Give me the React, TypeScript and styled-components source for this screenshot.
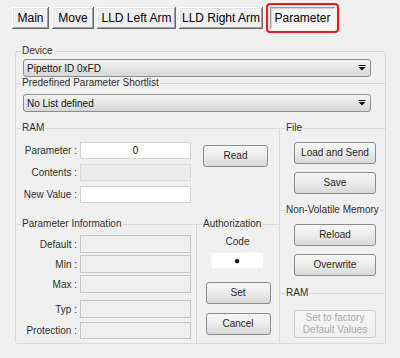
import React from 'react';
import styled, { createGlobalStyle } from 'styled-components';

const GlobalStyle = createGlobalStyle`
  html, body {
    margin: 0;
    padding: 0;
    background: #f0f0f0;
  }
  body {
    font-family: "Liberation Sans", Arial, sans-serif;
  }
`;

const LINE = '#d8dbde';

const Screen = styled.div`
  width: 400px;
  height: 358px;
  background: #f0f0f0;
  overflow: hidden;
`;

/* tab strip */
const TabBar = styled.div`
  display: flex;
  align-items: center;
  gap: 3px;
  height: 30px;
  padding: 3px 0 0 12px;
`;

const Tab = styled.div<{ $w: number; $active?: boolean }>`
  width: ${(p) => p.$w}px;
  height: 22px;
  box-sizing: border-box;
  display: flex;
  align-items: center;
  justify-content: center;
  font-family: "Liberation Sans", Arial, sans-serif;
  font-size: 12px;
  color: #000;
  background: ${(p) => (p.$active ? '#f6f6f6' : '#f0f0f0')};
  box-shadow: ${(p) =>
    p.$active
      ? 'inset 1px 1px #9a9a9a, inset -1px -1px #ffffff, inset 2px 2px #d2d2d2'
      : 'inset -1px -1px #696969, inset 1px 1px #ffffff, inset -2px -2px #a0a0a0, inset 2px 2px #e3e3e3'};
`;

const Highlight = styled.div`
  border: 2px solid #ec1b1b;
  border-radius: 4px;
  padding: 2px;
`;

/* group boxes */
const Panel = styled.div`
  position: relative;
  margin: 18px 0 0 15px;
  width: 371px;
  height: 293px;
  box-sizing: border-box;
  border: 1px solid ${LINE};
  border-radius: 3px;
  font-family: "Liberation Sans", Arial, sans-serif;
  font-size: 10px;
  color: #332e2c;
`;

const Group = styled.div<{ $left?: boolean; $right?: boolean }>`
  position: relative;
  box-sizing: border-box;
  border-top: 1px solid ${LINE};
  border-left: ${(p) => (p.$left ? `1px solid ${LINE}` : 'none')};
  border-right: ${(p) => (p.$right ? `1px solid ${LINE}` : 'none')};
`;

const Caption = styled.span`
  position: absolute;
  top: -7px;
  left: 5px;
  padding: 0 1px;
  line-height: 12px;
  background: #f0f0f0;
  white-space: nowrap;
`;

/* combo box */
const Combo = styled.div`
  height: 18px;
  box-sizing: border-box;
  display: flex;
  align-items: center;
  justify-content: space-between;
  padding: 0 4px 0 3px;
  border: 1px solid #8e8e8e;
  border-radius: 3px;
  background: linear-gradient(#f3f3f3, #e6e6e6 50%, #d6d6d6);
  color: #111;
`;

const DeviceCombo = styled(Combo)`
  margin: 7px 14px 0 7px;
`;

const ShortlistGroup = styled(Group)`
  margin-top: 6px;
  padding: 10px 14px 16px 7px;
`;

const Arrow = () => (
  <svg width="8" height="6" viewBox="0 0 8 6">
    <rect x="0.5" y="0" width="7" height="1" fill="#111" />
    <polygon points="0.5,2 7.5,2 4,5.5" fill="#111" />
  </svg>
);

/* lower area */
const BottomRow = styled.div`
  display: flex;
  height: 215px;
`;

const LeftCol = styled.div`
  width: 263px;
  display: flex;
  flex-direction: column;
`;

const RightCol = styled.div`
  width: 106px;
  display: flex;
  flex-direction: column;
`;

const RamGroup = styled(Group)`
  height: 96px;
  padding-top: 13px;
  display: flex;
  align-items: flex-start;
`;

const FieldGrid = styled.div`
  display: grid;
  grid-template-columns: 61px 111px;
  grid-auto-rows: 17px;
  column-gap: 3px;
  row-gap: 5px;
`;

const Label = styled.span`
  display: flex;
  align-items: center;
  justify-content: flex-end;
  white-space: nowrap;
`;

const Field = styled.input<{ $tone: 'edit' | 'off' | 'info' | 'plain'; $center?: boolean }>`
  box-sizing: border-box;
  width: 100%;
  height: 100%;
  margin: 0;
  padding: 0 3px;
  font: inherit;
  color: #111;
  outline: none;
  text-align: ${(p) => (p.$center ? 'center' : 'left')};
  border: 1px solid
    ${(p) => ({ edit: '#d2d2d2', off: '#dadada', info: '#c6c6c6', plain: '#f4f4f4' }[p.$tone])};
  background: ${(p) => ({ edit: '#ffffff', off: '#ececec', info: '#efefef', plain: '#ffffff' }[p.$tone])};
`;

const LowerRow = styled.div`
  display: flex;
  height: 119px;
`;

const InfoGroup = styled(Group)`
  width: 181px;
  padding-top: 10px;
  display: flex;
  flex-direction: column;
`;

const InfoRow = styled.div<{ $mt: number; $h: number }>`
  display: grid;
  grid-template-columns: 61px 111px;
  column-gap: 3px;
  height: ${(p) => p.$h}px;
  margin-top: ${(p) => p.$mt}px;
`;

const AuthGroup = styled(Group)`
  width: 82px;
  padding-top: 11px;
  display: flex;
  flex-direction: column;
  align-items: center;
`;

const CodeLabel = styled.div`
  line-height: 12px;
  margin-left: -1px;
`;

const CodeBox = styled.div`
  width: 53px;
  height: 17px;
  margin: 4px 0 0 -2px;
`;

const Button = styled.button<{ $w: number; $h?: number; $mt?: number; $ml?: number }>`
  flex: none;
  width: ${(p) => p.$w}px;
  height: ${(p) => p.$h ?? 22}px;
  margin: ${(p) => p.$mt ?? 0}px 0 0 ${(p) => p.$ml ?? 0}px;
  box-sizing: border-box;
  padding: 0;
  border: 1px solid #8c8c8c;
  border-radius: 3px;
  background: linear-gradient(#f7f7f7, #ebebeb 50%, #d9d9d9);
  font: inherit;
  line-height: 12px;
  color: #2a2523;

  &:disabled {
    border-color: #cdcdcd;
    background: linear-gradient(#f6f6f6, #efefef);
    color: #a9a9a9;
  }
`;

const SideGroup = styled(Group)<{ $h?: number; $pt: number }>`
  ${(p) => (p.$h ? `height: ${p.$h}px;` : 'flex: 1;')}
  padding-top: ${(p) => p.$pt}px;
  display: flex;
  flex-direction: column;
`;

const tabs = [
  { label: 'Main', w: 37 },
  { label: 'Move', w: 42 },
  { label: 'LLD Left Arm', w: 79 },
  { label: 'LLD Right Arm', w: 84 },
];

const ramFields = [
  { label: 'Parameter :', tone: 'edit' as const, value: '0' },
  { label: 'Contents :', tone: 'off' as const, value: '' },
  { label: 'New Value :', tone: 'edit' as const, value: '' },
];

const infoFields = [
  { label: 'Default :', mt: 0, h: 18 },
  { label: 'Min :', mt: 2, h: 18 },
  { label: 'Max :', mt: 2, h: 18 },
  { label: 'Typ :', mt: 7, h: 18 },
  { label: 'Protection :', mt: 4, h: 17 },
];

export default function App() {
  return (
    <Screen>
      <GlobalStyle />
      <TabBar>
        {tabs.map((t) => (
          <Tab key={t.label} $w={t.w}>
            {t.label}
          </Tab>
        ))}
        <Highlight>
          <Tab $w={65} $active>
            Parameter
          </Tab>
        </Highlight>
      </TabBar>

      <Panel>
        <Caption>Device</Caption>
        <DeviceCombo>
          <span>Pipettor ID 0xFD</span>
          <Arrow />
        </DeviceCombo>

        <ShortlistGroup>
          <Caption>Predefined Parameter Shortlist</Caption>
          <Combo>
            <span>No List defined</span>
            <Arrow />
          </Combo>
        </ShortlistGroup>

        <BottomRow>
          <LeftCol>
            <RamGroup>
              <Caption>RAM</Caption>
              <FieldGrid>
                {ramFields.map((f) => (
                  <React.Fragment key={f.label}>
                    <Label>{f.label}</Label>
                    <Field $tone={f.tone} $center readOnly defaultValue={f.value} />
                  </React.Fragment>
                ))}
              </FieldGrid>
              <Button $w={65} $mt={3} $ml={12}>
                Read
              </Button>
            </RamGroup>

            <LowerRow>
              <InfoGroup $right>
                <Caption>Parameter Information</Caption>
                {infoFields.map((f) => (
                  <InfoRow key={f.label} $mt={f.mt} $h={f.h}>
                    <Label>{f.label}</Label>
                    <Field $tone="info" readOnly defaultValue="" />
                  </InfoRow>
                ))}
              </InfoGroup>

              <AuthGroup>
                <Caption>Authorization</Caption>
                <CodeLabel>Code</CodeLabel>
                <CodeBox>
                  <Field $tone="plain" $center readOnly defaultValue={'\u25CF'} />
                </CodeBox>
                <Button $w={65} $mt={13}>
                  Set
                </Button>
                <Button $w={65} $mt={9}>
                  Cancel
                </Button>
              </AuthGroup>
            </LowerRow>
          </LeftCol>

          <RightCol>
            <SideGroup $left $h={82} $pt={13}>
              <Caption>File</Caption>
              <Button $w={82} $ml={14}>
                Load and Send
              </Button>
              <Button $w={82} $ml={14} $mt={8}>
                Save
              </Button>
            </SideGroup>
            <SideGroup $left $h={83} $pt={13}>
              <Caption>Non-Volatile Memory</Caption>
              <Button $w={82} $ml={14}>
                Reload
              </Button>
              <Button $w={82} $ml={14} $mt={8}>
                Overwrite
              </Button>
            </SideGroup>
            <SideGroup $left $pt={16}>
              <Caption>RAM</Caption>
              <Button $w={82} $h={28} $ml={14} disabled>
                Set to factory
                <br />
                Default Values
              </Button>
            </SideGroup>
          </RightCol>
        </BottomRow>
      </Panel>
    </Screen>
  );
}
